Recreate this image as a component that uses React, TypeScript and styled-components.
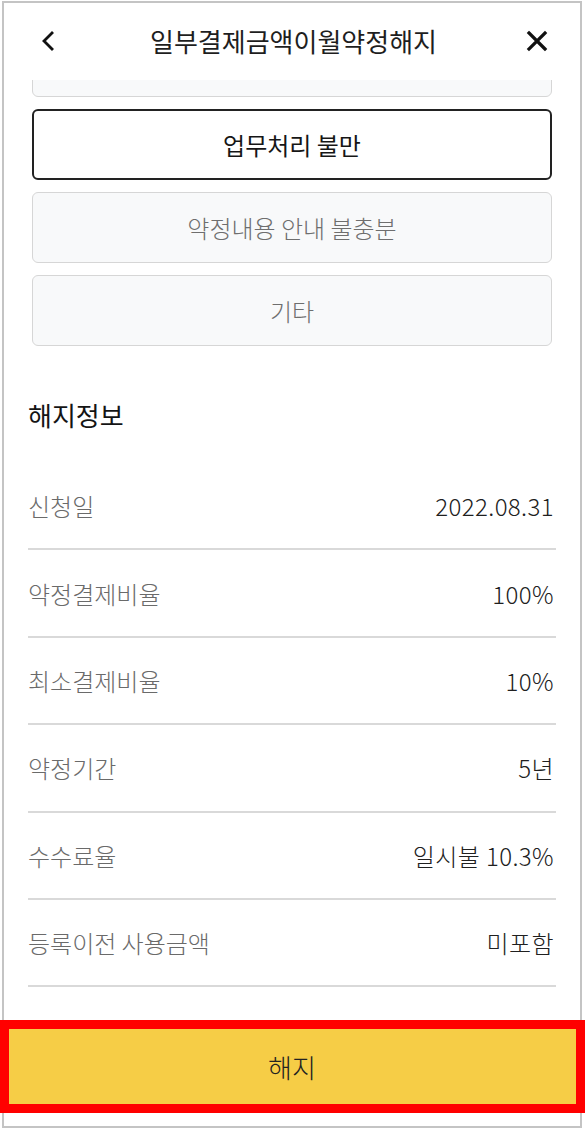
import React from "react";
import styled, { createGlobalStyle } from "styled-components";

const GlobalStyle = createGlobalStyle`
  html, body {
    margin: 0;
    padding: 0;
    background: #ffffff;
  }
  body {
    font-family: "Noto Sans CJK KR", "Noto Sans", sans-serif;
    color: #222222;
  }
`;

const Frame = styled.div`
  position: relative;
  box-sizing: border-box;
  width: 580px;
  height: 1127px;
  margin: 1px 0 0 2px;
  border: 2px solid #c4c4c4;
  background: #ffffff;
  display: flex;
  flex-direction: column;
`;

const Header = styled.header`
  height: 75px;
  flex-shrink: 0;
  display: grid;
  grid-template-columns: 64px 1fr 64px;
  align-items: center;
  padding: 0 32px 2px 35px;
  background: #ffffff;
`;

const IconButton = styled.button<{ $align?: "start" | "end" }>`
  border: 0;
  background: none;
  padding: 0;
  display: flex;
  justify-content: ${(p) => (p.$align === "end" ? "flex-end" : "flex-start")};
  align-items: center;
  color: #111111;
`;

const Title = styled.h1`
  margin: 0;
  text-align: center;
  font-size: 26px;
  font-weight: 400;
  color: #1e1e1e;
  white-space: nowrap;
`;

const Content = styled.div`
  flex: 1;
  overflow: hidden;
  display: flex;
  flex-direction: column;
  padding: 0 24px;
`;

const OptionList = styled.div`
  display: flex;
  flex-direction: column;
  gap: 12px;
  padding: 0 4px;
`;

const Option = styled.button<{ $selected?: boolean; $cut?: boolean }>`
  box-sizing: border-box;
  height: 71px;
  width: 100%;
  margin-top: ${(p) => (p.$cut ? "-54px" : "0")};
  border-radius: 6px;
  border: ${(p) => (p.$selected ? "2px solid #222222" : "1px solid #d6d6d6")};
  background: ${(p) => (p.$selected ? "#ffffff" : "#f8f9fa")};
  color: ${(p) => (p.$selected ? "#161616" : "#6e6e6e")};
  font-family: "Noto Sans CJK KR", "Noto Sans", sans-serif;
  font-size: 24px;
  font-weight: ${(p) => (p.$selected ? 400 : 300)};
`;

const SectionTitle = styled.h2`
  margin: 52px 0 0;
  font-size: 26px;
  line-height: 34px;
  font-weight: 400;
  color: #141414;
`;

const InfoList = styled.dl`
  margin: 31px 0 0;
  display: flex;
  flex-direction: column;
`;

const InfoRow = styled.div`
  box-sizing: border-box;
  height: 87.4px;
  display: flex;
  justify-content: space-between;
  align-items: center;
  padding: 0 2px 0 0;
  border-bottom: 2px solid #d9d9d9;
  font-size: 24px;
  font-weight: 300;
`;

const Label = styled.dt`
  margin: 0;
  color: #6a6a6a;
`;

const Value = styled.dd`
  margin: 0;
  color: #202020;
  letter-spacing: 0.4px;
`;

const SubmitButton = styled.button`
  position: relative;
  flex-shrink: 0;
  height: 93px;
  margin-bottom: 13px;
  border: 0;
  background: #f6cd46;
  color: #222222;
  font-family: "Noto Sans CJK KR", "Noto Sans", sans-serif;
  font-size: 26px;
  font-weight: 300;
`;

const Highlight = styled.span`
  position: absolute;
  top: 0;
  bottom: 0;
  left: -4px;
  right: -5px;
  border: 9px solid #ff0000;
  pointer-events: none;
`;

const BackIcon = () => (
  <svg width="16" height="22" viewBox="0 0 16 22" fill="none">
    <path
      d="M13 3L5 11L13 19"
      stroke="currentColor"
      strokeWidth="2.8"
      strokeLinecap="square"
    />
  </svg>
);

const CloseIcon = () => (
  <svg width="22" height="22" viewBox="0 0 22 22" fill="none">
    <path
      d="M3 3L19 19M19 3L3 19"
      stroke="currentColor"
      strokeWidth="3.2"
      strokeLinecap="square"
    />
  </svg>
);

const reasons = [
  { label: "서비스 불만", cut: true },
  { label: "업무처리 불만", selected: true },
  { label: "약정내용 안내 불충분" },
  { label: "기타" },
];

const infos = [
  ["신청일", "2022.08.31"],
  ["약정결제비율", "100%"],
  ["최소결제비율", "10%"],
  ["약정기간", "5년"],
  ["수수료율", "일시불 10.3%"],
  ["등록이전 사용금액", "미포함"],
];

export default function App() {
  return (
    <>
      <GlobalStyle />
      <Frame>
        <Header>
          <IconButton aria-label="뒤로">
            <BackIcon />
          </IconButton>
          <Title>일부결제금액이월약정해지</Title>
          <IconButton $align="end" aria-label="닫기">
            <CloseIcon />
          </IconButton>
        </Header>

        <Content>
          <OptionList>
            {reasons.map((r) => (
              <Option key={r.label} $selected={r.selected} $cut={r.cut}>
                {r.cut ? "" : r.label}
              </Option>
            ))}
          </OptionList>

          <SectionTitle>해지정보</SectionTitle>
          <InfoList>
            {infos.map(([label, value]) => (
              <InfoRow key={label}>
                <Label>{label}</Label>
                <Value>{value}</Value>
              </InfoRow>
            ))}
          </InfoList>
        </Content>

        <SubmitButton>
          해지
          <Highlight />
        </SubmitButton>
      </Frame>
    </>
  );
}
